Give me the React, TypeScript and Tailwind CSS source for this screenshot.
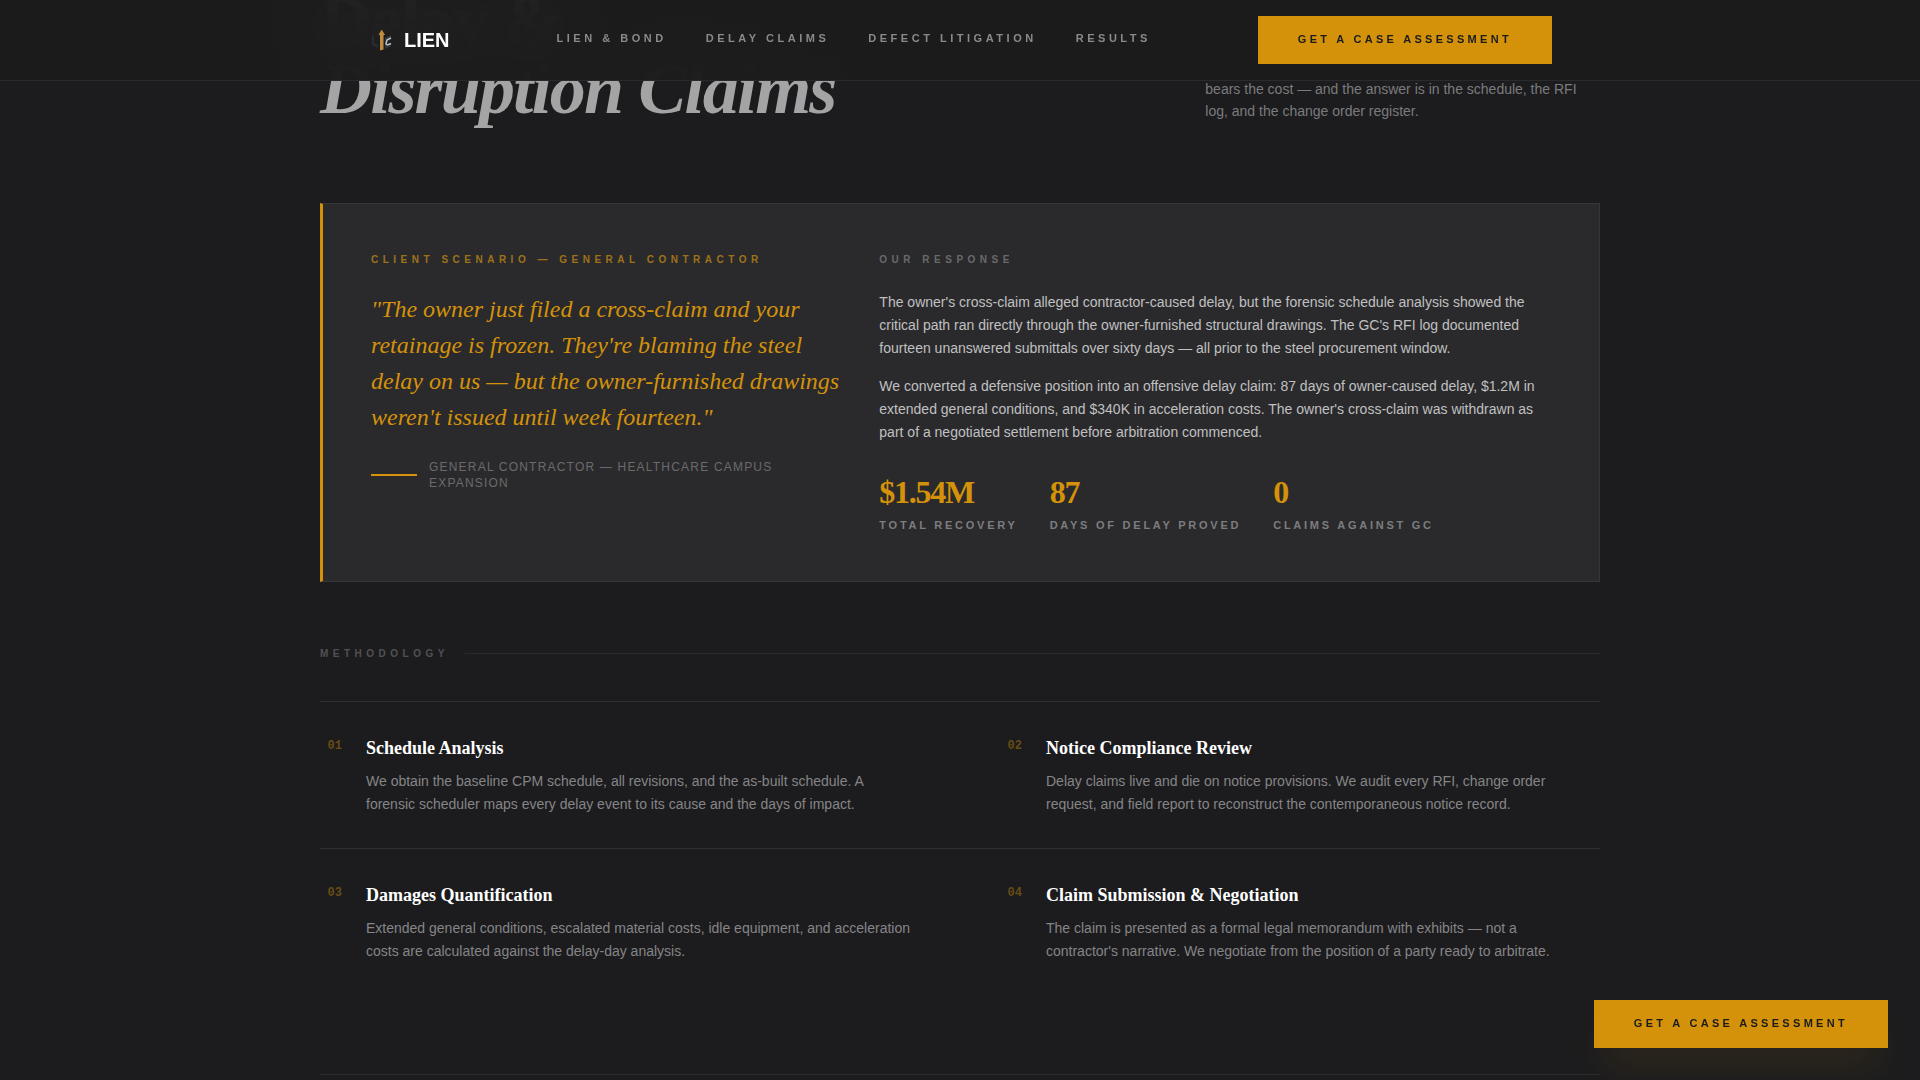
const navLinks = ["Lien & Bond", "Delay Claims", "Defect Litigation", "Results"]

const stats = [
  { value: "$1.54M", label: "Total Recovery" },
  { value: "87", label: "Days of Delay Proved" },
  { value: "0", label: "Claims Against GC" },
]

const steps = [
  {
    num: "01",
    title: "Schedule Analysis",
    text: "We obtain the baseline CPM schedule, all revisions, and the as-built schedule. A forensic scheduler maps every delay event to its cause and the days of impact.",
  },
  {
    num: "02",
    title: "Notice Compliance Review",
    text: "Delay claims live and die on notice provisions. We audit every RFI, change order request, and field report to reconstruct the contemporaneous notice record.",
  },
  {
    num: "03",
    title: "Damages Quantification",
    text: "Extended general conditions, escalated material costs, idle equipment, and acceleration costs are calculated against the delay-day analysis.",
  },
  {
    num: "04",
    title: "Claim Submission & Negotiation",
    text: "The claim is presented as a formal legal memorandum with exhibits — not a contractor's narrative. We negotiate from the position of a party ready to arbitrate.",
  },
]

const Logo = () => (
  <a href="#" className="flex items-center gap-2">
    <svg viewBox="0 0 28 28" className="h-7 w-7" aria-hidden="true">
      <path d="M4 9v10l6 3v-3l-4-2V10z" fill="#262d32" />
      <path d="M17 12l6-3v3l-4 2v5l4-1v2l-6 3z" fill="#30383e" />
      <path d="M23 12l-4 2-1 4 1.500 1 3.500-1.500" fill="none" stroke="#b9c3ca" strokeWidth="1.500" />
      <path d="M13.700 3.500l3.300 5.500h-1.500v14.500l-3.500 1V9h-1.500z" fill="#c28c40" />
    </svg>
    <span className="text-xl font-bold text-white">LIEN</span>
  </a>
)

const CtaButton = ({ className = "" }: { className?: string }) => (
  <button
    type="button"
    className={`h-12 bg-[#d4920a] px-10 pb-0.5 text-[11px] leading-4 font-bold tracking-[0.3em] whitespace-nowrap text-[#1c1c1e] uppercase ${className}`}
  >
    Get a Case Assessment
  </button>
)

const Header = () => (
  <header className="fixed inset-x-0 top-0 z-20 border-b border-[#2a2a2c] bg-[#1c1c1c]/97 backdrop-blur-xl">
    <div className="mx-auto flex h-20 max-w-7xl items-center justify-between px-12">
      <Logo />
      <nav className="flex gap-[39px] pb-1">
        {navLinks.map((link) => (
          <a
            key={link}
            href="#"
            className="text-[11px] leading-4 font-bold tracking-[0.32em] whitespace-nowrap text-[#8a8a8c] uppercase"
          >
            {link}
          </a>
        ))}
      </nav>
      <CtaButton />
    </div>
  </header>
)

const Scenario = () => (
  <article className="mt-20 grid grid-cols-12 gap-10 border border-l-[3px] border-[#363638] border-l-[#d4920a] bg-[#2a2a2c] p-12">
    <div className="col-span-5">
      <p className="mb-6 text-[10px] leading-[15px] font-bold tracking-[0.45em] text-[#9f721a] uppercase">
        Client Scenario — General Contractor
      </p>
      <blockquote className="font-['Liberation_Serif',serif] text-2xl leading-9 text-[#d4920a] italic">
        "The owner just filed a cross-claim and your retainage is frozen. They're blaming the steel delay on us — but
        the owner-furnished drawings weren't issued until week fourteen."
      </blockquote>
      <div className="mt-6 flex items-center gap-3">
        <span className="h-0.5 w-[46px] shrink-0 bg-[#d4920a]" />
        <span className="text-xs leading-4 tracking-widest text-[#6a6a6c] uppercase">
          General Contractor — Healthcare Campus Expansion
        </span>
      </div>
    </div>

    <div className="col-span-7">
      <p className="mb-6 text-[10px] leading-[15px] font-bold tracking-[0.45em] text-[#69696b] uppercase">
        Our Response
      </p>
      <div className="flex flex-col gap-[15px] text-sm leading-[23px] text-[#c0c0c1]">
        <p>
          The owner's cross-claim alleged contractor-caused delay, but the forensic schedule analysis showed the
          critical path ran directly through the owner-furnished structural drawings. The GC's RFI log documented
          fourteen unanswered submittals over sixty days — all prior to the steel procurement window.
        </p>
        <p>
          We converted a defensive position into an offensive delay claim: 87 days of owner-caused delay, $1.2M in
          extended general conditions, and $340K in acceleration costs. The owner's cross-claim was withdrawn as part
          of a negotiated settlement before arbitration commenced.
        </p>
      </div>
      <dl className="mt-8 flex gap-8">
        {stats.map((stat) => (
          <div key={stat.label} className="flex flex-col-reverse gap-[10px]">
            <dt className="text-[11px] leading-[15px] font-bold tracking-[0.25em] whitespace-nowrap text-[#7d7d7f] uppercase">
              {stat.label}
            </dt>
            <dd className="font-['Liberation_Serif',serif] text-[32px] leading-8 font-bold tracking-[-0.04em] text-[#d4920a]">
              {stat.value}
            </dd>
          </div>
        ))}
      </dl>
    </div>
  </article>
)

const Methodology = () => (
  <section className="mt-16">
    <div className="mb-10 flex items-center gap-4">
      <h3 className="text-[10px] leading-[15px] font-bold tracking-[0.45em] text-[#515153] uppercase">Methodology</h3>
      <span className="h-px flex-1 bg-[#2a2a2c]" />
    </div>
    {[steps.slice(0, 2), steps.slice(2)].map((row) => (
      <div key={row[0].num} className="grid grid-cols-2 gap-20 border-t border-[#303032] py-8">
        {row.map((step) => (
          <div key={step.num} className="flex gap-6">
            <span className="mt-1 w-[22px] shrink-0 text-right font-['Liberation_Mono',monospace] text-xs leading-4 font-bold text-[#664c14]">
              {step.num}
            </span>
            <div className="max-w-[546px]">
              <h4 className="mb-2 font-['Liberation_Serif',serif] text-lg leading-7 font-bold text-white">
                {step.title}
              </h4>
              <p className="text-sm leading-[23px] text-[#858587]">{step.text}</p>
            </div>
          </div>
        ))}
      </div>
    ))}
  </section>
)

export default function App() {
  return (
    <div className="h-screen overflow-hidden bg-[#1c1c1e] font-['Liberation_Sans',Arial,sans-serif]">
      <Header />
      <main className="mx-auto -mt-[13px] max-w-7xl">
        <div className="grid grid-cols-12 items-end gap-12">
          <h2 className="col-span-8 font-['Liberation_Serif',serif] text-7xl leading-[68px] font-bold tracking-tight text-white">
            Delay &amp;
            <br />
            <em className="text-[#a4a4a5]">Disruption Claims</em>
          </h2>
          <p className="col-span-4 pb-px text-sm leading-[22px] text-[#7b7b7d]">
            bears the cost — and the answer is in the schedule, the RFI log, and the change order register.
          </p>
        </div>
        <Scenario />
        <Methodology />
        <hr className="mt-[79px] border-[#2a2a2c]" />
      </main>
      <CtaButton className="fixed right-8 bottom-8 z-10 shadow-[0_24px_40px_-8px_rgba(212,146,10,0.12)]" />
    </div>
  )
}
